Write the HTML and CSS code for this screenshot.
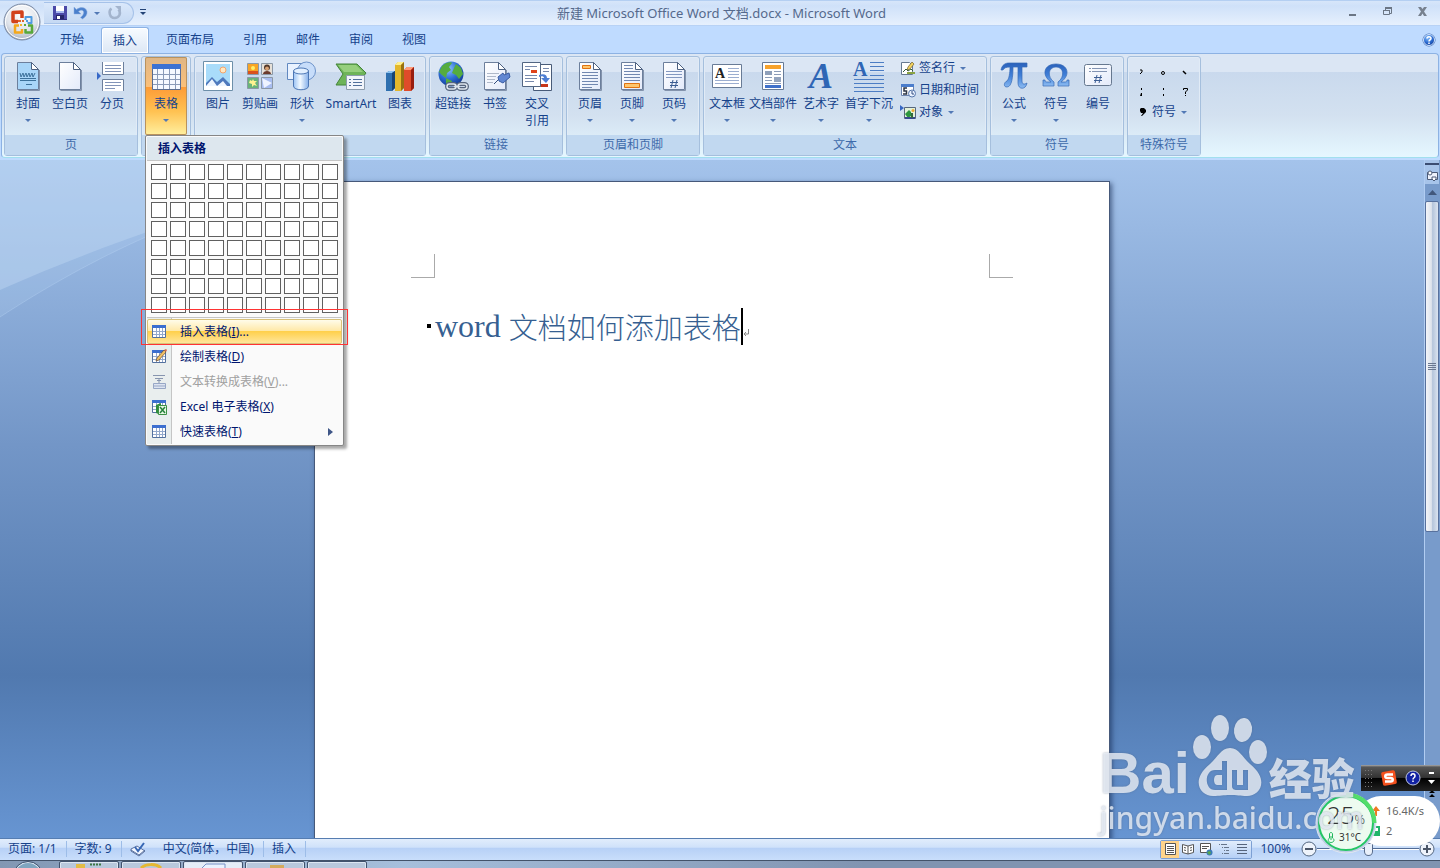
FILE: index.html
```html
<!DOCTYPE html>
<html lang="zh-CN">
<head>
    <meta charset="UTF-8">
    <meta name="viewport" content="width=device-width, initial-scale=1.0">
    <title>新建 Microsoft Office Word 文档.docx - Microsoft Word</title>
    <link rel="stylesheet" href="styles.css">
</head>
<body>
    <svg class="defs" aria-hidden="true">
        <defs>
            <linearGradient id="blue" x1="0" y1="0" x2="0" y2="1">
                <stop offset="0" stop-color="#2b62bb"/><stop offset=".5" stop-color="#3f7fd8"/><stop offset="1" stop-color="#8dbcf2"/>
            </linearGradient>
            <linearGradient id="paper" x1="0" y1="0" x2="1" y2="1">
                <stop offset="0" stop-color="#ffffff"/><stop offset="1" stop-color="#e3eafa"/>
            </linearGradient>
            <linearGradient id="shape" x1="0" y1="0" x2="1" y2="0">
                <stop offset="0" stop-color="#9cc3f4"/><stop offset=".45" stop-color="#f2f9ff"/><stop offset="1" stop-color="#86b0ea"/>
            </linearGradient>
            <radialGradient id="ball" cx=".4" cy=".3" r=".8">
                <stop offset="0" stop-color="#8cc4ff"/><stop offset=".5" stop-color="#2c6cd2"/><stop offset="1" stop-color="#0b2f86"/>
            </radialGradient>
            <radialGradient id="orb" cx=".5" cy=".3" r=".75">
                <stop offset="0" stop-color="#ffffff"/><stop offset=".6" stop-color="#dfe3ea"/><stop offset="1" stop-color="#9ba6b8"/>
            </radialGradient>
            <symbol id="page" viewBox="0 0 32 32">
                <path d="M5.500 2.500h14l7 7v20h-21z" fill="url(#paper)" stroke="#6c7f9c"/>
                <path d="M19.500 2.500v7h7z" fill="#fff" stroke="#4c6080"/>
                <path d="M27.500 10v20.500h-21" fill="none" stroke="#8393ac"/>
            </symbol>
            <symbol id="grid" viewBox="0 0 16 16">
                <path d="M1.500 1.500h13v12h-13z" fill="#fff" stroke="#53719f"/>
                <path d="M1 1h14v3H1z" fill="#3b6fd0"/>
                <path d="M2 7.500h12M2 10.500h12M5.500 4v9M8.500 4v9M11.500 4v9" stroke="#93a9cc"/>
            </symbol>
        </defs>
    </svg>

    <header class="titlebar">
        <div class="quick">
            <button class="tool" aria-label="保存"><svg width="16" height="16" viewBox="0 0 16 16"><path d="M1 1h14v14H1z" fill="#4a49a8"/><path d="M4 1h8v6H4z" fill="#fff"/><path d="M4 6h8v2H4z" fill="#a7b8f0"/><path d="M4 10h8v5H4z" fill="#25256a"/><path d="M5 11h3v4H5z" fill="#fff"/><path d="M1 14h14v1H1z" fill="#302e80"/></svg></button>
            <button class="tool" aria-label="撤消"><svg width="16" height="16" viewBox="0 0 16 16"><path d="M1 2v7h7L5.500 6.500c3-2.500 6-1 5 2-.5 2-2 3-3 4l2 1.500c3-2 5-4.500 4.500-7.500C13 2 7.500 1.500 3.500 4.500z" fill="#4b80cc" stroke="#8caee0" stroke-width=".5"/></svg></button>
            <button class="drop" aria-label="撤消列表"></button>
            <button class="tool" aria-label="恢复"><svg width="16" height="16" viewBox="0 0 16 16"><path d="M4.500 3.500C1 6 2.500 13 7.500 13s7-5 4-8.500" fill="none" stroke="#a3b4cd" stroke-width="2.500"/><path d="M8 1h6v6z" fill="#a3b4cd"/></svg></button>
        </div>
        <button class="customize" aria-label="自定义快速访问工具栏"><span class="drop"></span></button>
        <h1 class="caption">新建 Microsoft Office Word 文档.docx - Microsoft Word</h1>
        <div class="window-buttons">
            <button aria-label="最小化"><svg width="11" height="11"><path d="M2 8h7v2H2z" fill="#6b7685"/></svg></button>
            <button aria-label="还原"><svg width="11" height="11"><path d="M3.500 4V2.500h6v5H8M1.500 4.500h6v4h-6z" fill="none" stroke="#6b7685"/><path d="M3 1h7v2H3zM1 4h7v1H1z" fill="#6b7685"/></svg></button>
            <button aria-label="关闭"><svg width="11" height="11"><path d="M1 1h3l1.500 2L7 1h3L7 5.500 10 10H7L5.500 7.500 4 10H1l3-4.500z" fill="#77818f"/></svg></button>
        </div>
        <button class="office" aria-label="Office 按钮">
            <svg width="40" height="40" viewBox="0 0 40 40">
                <circle cx="20" cy="20" r="18" fill="url(#orb)" stroke="#7989a4"/>
                <circle cx="20" cy="20" r="16.500" fill="none" stroke="#fff"/>
                <g fill="none" stroke-linejoin="round">
                    <path d="M16 19.500h-5v-9l9-.5v6" stroke="#d2421c" stroke-width="3.500"/>
                    <path d="M23.500 18v-3h6v6h-4" stroke="#4f9be0" stroke-width="2"/>
                    <path d="M17 23.500h-4v7h7V27" stroke="#f4a81c" stroke-width="2.500"/>
                    <path d="M23.500 27v3.500h6.500v-7h-4" stroke="#57a83a" stroke-width="2.500"/>
                </g>
                <path d="M16 18h3v2h-3zM20 18h2v2h-2z" fill="#e2642a"/><path d="M24 18h2v2h-2z" fill="#4f9be0"/><path d="M18 22h2v2h-2z" fill="#f4b52c"/><path d="M22 22h2v2h-2z" fill="#57a83a"/>
            </svg>
        </button>
    </header>

    <nav class="tabs">
        <button>开始</button>
        <button class="active">插入</button>
        <button>页面布局</button>
        <button>引用</button>
        <button>邮件</button>
        <button>审阅</button>
        <button>视图</button>
        <button class="help" aria-label="帮助"><svg width="14" height="14"><circle cx="7" cy="7" r="6" fill="url(#ball)" stroke="#3d6ab5"/><circle cx="7" cy="7" r="5.500" fill="none" stroke="#cfe2fb"/><path d="M5 5.500c0-2.500 4-2.500 4 0C9 7 7 6.500 7 8.500M7 9.500v1.500" fill="none" stroke="#fff" stroke-width="1.500"/></svg></button>
    </nav>

    <div class="ribbon">
        <section class="group">
            <div class="commands">
                <button class="cmd"><svg class="icon" viewBox="0 0 32 32"><use href="#page"/><path d="M6 3h13v7h7v19H6z" fill="#a8d5f8"/><path d="M8 13l1 4 2-4 1 4 2-4 1 4 2-4 1 4 2-4 1 4 2-4M8 18.500h16M8 20.500h16M14 24.500h6" fill="none" stroke="#3c719b"/></svg><span>封面</span><i class="drop"></i></button>
                <button class="cmd"><svg class="icon" viewBox="0 0 32 32"><use href="#page"/></svg><span>空白页</span></button>
                <button class="cmd"><svg class="icon" viewBox="0 0 32 32"><path d="M6.500 2v12.500h21V2M6.500 31V19.500h21V31" fill="#fff" stroke="#6c7f9c"/><path d="M9 5.500h16M9 8.500h16M9 11.500h16M9 22.500h16M9 25.500h16M9 28.500h10" stroke="#8294b8"/><path d="M1 12l4 4-4 4z" fill="#3769c8"/></svg><span>分页</span></button>
            </div>
            <h2>页</h2>
        </section>

        <section class="group table-group" aria-label="表格">
            <div class="commands">
                <button class="cmd pressed"><svg class="icon" viewBox="0 0 32 32"><path d="M2.500 4.500h28v25h-28z" fill="#f5f8ff" stroke="#596c90"/><path d="M2 4h29v5H2z" fill="#3c72d2"/><path d="M3 14.500h27M3 19.500h27M3 24.500h27M7.500 9v20M13.500 9v20M19.500 9v20M25.500 9v20" stroke="#8a9ab8"/></svg><span>表格</span><i class="drop"></i></button>
            </div>
            <h2></h2>
            <div class="menu">
                <h3>插入表格</h3>
                <div class="cells" id="cells"></div>
                <div class="menu-items">
                    <button class="hot"><svg class="small"><use href="#grid"/></svg><span>插入表格(<u>I</u>)...</span></button>
                    <button><svg class="small" viewBox="0 0 16 16"><use href="#grid"/><path d="M5 12l1-3 7-8 2 2-7 8z" fill="#f1c163" stroke="#644b35" stroke-width=".7"/><path d="M13 1l2 2 1-2-1-1z" fill="#cf6b50"/></svg><span>绘制表格(<u>D</u>)</span></button>
                    <button disabled><svg class="small" viewBox="0 0 16 16"><path d="M2 1.500h12M4 4.500h8M8 4v5M6 6.500h4" fill="none" stroke="#8795af"/><path d="M2.500 9.500h12v5h-12zM2.500 12h12" fill="#dde4f1" stroke="#97a7c6"/></svg><span>文本转换成表格(<u>V</u>)...</span></button>
                    <button><svg class="small" viewBox="0 0 16 16"><use href="#grid"/><path d="M5 6l5-2v12l-5-2z" fill="#2e8c3c"/><path d="M7.500 6.500h8v9h-8z" fill="#e8f7e5" stroke="#3d9146"/><path d="M9 8l5 6M14 8l-5 6" stroke="#24813a" stroke-width="1.500"/></svg><span>Excel 电子表格(<u>X</u>)</span></button>
                    <button><svg class="small"><use href="#grid"/></svg><span>快速表格(<u>T</u>)</span><svg class="more" width="5" height="8"><path d="M0 0l5 4-5 4z" fill="#3f5687"/></svg></button>
                </div>
                <div class="mark"></div>
            </div>
        </section>

        <section class="group" aria-label="插图">
            <div class="commands">
                <button class="cmd"><svg class="icon" viewBox="0 0 32 32"><path d="M1.500 1.500h29v29h-29z" fill="#fff" stroke="#6d8fa9"/><path d="M4 4h24v22H4z" fill="#a9dcfa"/><circle cx="21" cy="10" r="3" fill="#ffe8c2" stroke="#f3a46b"/><path d="M4 26v-3l6-6 5 5 6-5 7 7v2z" fill="#4e79bd"/><path d="M4 26l6-7 5 7 6-5 4 5z" fill="#edf5ff"/></svg><span>图片</span></button>
                <button class="cmd"><svg class="icon" viewBox="0 0 32 32"><path d="M3.500 3.500h11v11h-11z" fill="#f8a425" stroke="#8b98a6"/><path d="M4 11h10v3H4z" fill="#d9521d"/><circle cx="9" cy="8" r="2" fill="#fff069"/><path d="M17.500 3.500h11v11h-11z" fill="#e6e0d8" stroke="#8b98a6"/><circle cx="23" cy="7.500" r="3" fill="#51382b"/><circle cx="23" cy="8.500" r="2" fill="#d8a173"/><path d="M19 14c0-4 8-4 8 0z" fill="#6c3b2c"/><path d="M3.500 17.500h11v11h-11z" fill="#69b37a" stroke="#8b98a6"/><path d="M6 20l2 1 1-2 1 2h3l-2 2 2 3-3-1-2 2v-3l-3-1z" fill="#fff391"/><path d="M17.500 17.500h11v11h-11z" fill="#a8bdf0" stroke="#8b98a6"/><path d="M18 18l10 5-8 5z" fill="#eef3ff"/></svg><span>剪贴画</span></button>
                <button class="cmd"><svg class="icon" viewBox="0 0 32 32"><path d="M1.500 3.500h18v16h-18z" fill="#e9f2ff" stroke="#6188c0"/><circle cx="20.500" cy="11" r="9" fill="#c7ddfa" stroke="#6d93ca"/><path d="M7.500 11v15c0 5 15 5 15 0V11z" fill="url(#shape)" stroke="#4d77b5"/><ellipse cx="15" cy="11" rx="7.500" ry="3" fill="#e3f0ff" stroke="#4d77b5"/></svg><span>形状</span><i class="drop"></i></button>
                <button class="cmd wide-56"><svg class="icon" viewBox="0 0 32 32"><path d="M1 4h21l9 9-9 12H1l7-11z" fill="#6eb459" stroke="#44853a"/><path d="M3 5h18l7 7H9z" fill="#96cf7d"/><path d="M11.500 15.500h18v14h-18z" fill="#f2f5fb" stroke="#8c9cad"/><path d="M14 19.500h2M18 19.500h9M14 22.500h2M18 22.500h9M14 25.500h2M18 25.500h9" stroke="#52709b"/></svg><span>SmartArt</span></button>
                <button class="cmd"><svg class="icon" viewBox="0 0 32 32"><path d="M2 13l3-2h6v17l-3 3H2z" fill="#2e6faf"/><path d="M2 13l3-2h6l-3 2z" fill="#8ec5f2"/><path d="M8 13l3-2v17l-3 3z" fill="#174474"/><path d="M11 5l3-3h6v26l-3 3h-6z" fill="#e3b72b"/><path d="M11 5l3-3h6l-3 3z" fill="#fff08d"/><path d="M17 5l3-3v26l-3 3z" fill="#987010"/><path d="M20 10l3-3h7v21l-3 3h-7z" fill="#df4b2a"/><path d="M20 10l3-3h7l-3 3z" fill="#ff9b79"/><path d="M27 10l3-3v21l-3 3z" fill="#981e10"/></svg><span>图表</span></button>
            </div>
            <h2></h2>
        </section>

        <section class="group">
            <div class="commands">
                <button class="cmd"><svg class="icon" viewBox="0 0 32 32"><circle cx="14" cy="14" r="12.500" fill="url(#ball)"/><path d="M5 6c5-5 10-4 10-3l-3 4 2 3-4 3-1 5-4-3-3-3zM19 4l5 4 2 6-4 5-3-4-4-2 2-5zM9 18l6 3-2 5-4-2z" fill="#55ac3e"/><g fill="none" stroke="#56657d" stroke-width="4"><rect x="10" y="24" width="9" height="5" rx="2.500"/><rect x="21" y="24" width="9" height="5" rx="2.500"/><path d="M17 26.500h6"/></g><g fill="none" stroke="#dce4ed" stroke-width="1.500"><rect x="10" y="24" width="9" height="5" rx="2.500"/><rect x="21" y="24" width="9" height="5" rx="2.500"/><path d="M17 26.500h6"/></g></svg><span>超链接</span></button>
                <button class="cmd"><svg class="icon" viewBox="0 0 32 32"><use href="#page"/><path d="M8 13.500h12M8 16.500h9M8 19.500h8M8 22.500h6" stroke="#aeb8c9"/><path d="M15 24l7-7" stroke="#344e7c"/><path d="M19 17l5-4 1 2 5-2 1 4-7 6-4-2z" fill="#6187d2" stroke="#3a5da4"/></svg><span>书签</span></button>
                <button class="cmd"><svg class="icon" viewBox="0 0 32 32"><path d="M12.500 4.500h18v26h-18z" fill="#fff" stroke="#485b78"/><path d="M19 24h8v3h-8z" fill="#c73719"/><path d="M1.500 2.500h18v24h-18z" fill="#fff" stroke="#526683"/><path d="M4 6.500h12M4 9.500h5M4 15.500h12M4 18.500h12M4 21.500h9M22 8.500h6M22 11.500h6" stroke="#7789ac"/><path d="M10 10h6v3h-6z" fill="#df431b"/><path d="M18 15c5-2 8 0 8 3h3l-4 5-5-5h3c0-2-3-2-5-1z" fill="#4d7ed3"/></svg><span>交叉<br>引用</span></button>
            </div>
            <h2>链接</h2>
        </section>

        <section class="group">
            <div class="commands">
                <button class="cmd"><svg class="icon" viewBox="0 0 32 32"><use href="#page"/><path d="M8.500 5.500h8v3h-8z" fill="#ffc66d" stroke="#df7412"/><path d="M8 12.500h16M8 15.500h16M8 18.500h16M8 21.500h16M8 24.500h16M8 27.500h10" stroke="#7187b0"/></svg><span>页眉</span><i class="drop"></i></button>
                <button class="cmd"><svg class="icon" viewBox="0 0 32 32"><use href="#page"/><path d="M8 5.500h9M8 8.500h9M8 11.500h16M8 14.500h16M8 17.500h16M8 20.500h16" stroke="#7187b0"/><path d="M8.500 23.500h15v4h-15z" fill="#ffc66d" stroke="#df7412"/></svg><span>页脚</span><i class="drop"></i></button>
                <button class="cmd"><svg class="icon" viewBox="0 0 32 32"><use href="#page"/><path d="M8 11.500h16M8 14.500h16M8 17.500h16" stroke="#8398c0"/><path d="M15 20l-2 8M19 20l-2 8M12 22.500h8M12 25.500h8" stroke="#3a5c91"/></svg><span>页码</span><i class="drop"></i></button>
            </div>
            <h2>页眉和页脚</h2>
        </section>

        <section class="group">
            <div class="commands">
                <button class="cmd"><svg class="icon" viewBox="0 0 32 32"><path d="M1.500 4.500h29v23h-29z" fill="#fff" stroke="#687b96"/><path d="M17 8.500h11M17 11.500h11M17 14.500h11M17 17.500h11M4 20.500h24M4 23.500h24" stroke="#9caed0"/><text x="4" y="18" class="letter black" font-size="14">A</text></svg><span>文本框</span><i class="drop"></i></button>
                <button class="cmd wide-50"><svg class="icon" viewBox="0 0 32 32"><path d="M5.500 2.500h21v27h-21z" fill="#fff" stroke="#667a97"/><path d="M8 5h16v4H8z" fill="#f6a22c"/><path d="M8 11h7v4H8z" fill="#8e9fb9"/><path d="M17 11.500h7M17 14.500h7M8 17.500h7M8 20.500h7M8 23.500h16" stroke="#8c9cb8"/><path d="M17 17h7v5h-7z" fill="#94a4be"/><path d="M8 25h16v3H8z" fill="#3f70ca"/></svg><span>文档部件</span><i class="drop"></i></button>
                <button class="cmd wide-46"><svg class="icon" viewBox="0 0 32 32"><text x="4" y="28" class="letter slant" font-size="36">A</text></svg><span>艺术字</span><i class="drop"></i></button>
                <button class="cmd wide-50"><svg class="icon" viewBox="0 0 32 32"><text x="0" y="16" class="letter" font-size="20">A</text><path d="M17 2.500h14M17 6.500h14M17 10.500h14M17 15.500h14M1 19.500h30M1 23.500h30M1 27.500h30M1 31.500h30" stroke="#4c7dc4"/></svg><span>首字下沉</span><i class="drop"></i></button>
                <div class="stack">
                    <button><svg class="small" viewBox="0 0 16 16"><path d="M1.500 2.500h8l3 3v9h-11z" fill="#fff" stroke="#667991"/><path d="M3 12l3-3 2 2 3-2 2 2" fill="none" stroke="#345a36"/><path d="M7 10l1-3 4-5 2 2-4 5z" fill="#f3d35e" stroke="#6d5b2d" stroke-width=".7"/><path d="M7 12h8v2H7z" fill="#8aa342"/></svg>签名行<i class="drop"></i></button>
                    <button><svg class="small" viewBox="0 0 16 16"><path d="M1.500 2.500h12v11h-12z" fill="#fff" stroke="#6c84b0"/><path d="M1 2h13v3H1z" fill="#4b7dcc"/><path d="M7 6H4v3h2.500v3H3" fill="none" stroke="#2d3544" stroke-width="1.500"/><circle cx="12" cy="11.500" r="3.500" fill="#e8f1ff" stroke="#5676aa"/><path d="M12 9v3h2" fill="none" stroke="#344e80"/></svg>日期和时间</button>
                    <button><svg class="small" viewBox="0 0 16 16"><path d="M4.500 3.500h11v11h-11z" fill="#e4f1d8" stroke="#57677c"/><path d="M0 1l4 3-4 3z" fill="#3767c2"/><path d="M5 10l4-4 2 2v4l-3 2z" fill="#2c963e"/><circle cx="13" cy="6.500" r="1.500" fill="#ebaa32"/><path d="M5 13h10v2H5z" fill="#37488d"/><path d="M12 9v5" stroke="#35673e" stroke-width="2"/></svg>对象<i class="drop"></i></button>
                </div>
            </div>
            <h2>文本</h2>
        </section>

        <section class="group">
            <div class="commands">
                <button class="cmd"><svg class="icon" viewBox="0 0 32 32"><path d="M3 10c1-5 4-7 8-7h18v4h-5v14c0 3 2 4 5 2-1 7-9 7-9 0V7h-5c0 9-1 20-6 20-4 0-3-5 0-6 2-2 3-8 3-14-4 0-6 1-7 3z" fill="url(#blue)" stroke="#366ab6" stroke-width=".7"/></svg><span>公式</span><i class="drop"></i></button>
                <button class="cmd"><svg class="icon" viewBox="0 0 32 32"><path d="M3 26v-6h2c0 2 1 2 3 2h3C1 15 4 4 16 4s15 11 5 18h3c2 0 3 0 3-2h2v6H18v-4c7-5 6-15-2-15s-9 10-2 15v4z" fill="url(#blue)" stroke="#366ab6" stroke-width=".7"/></svg><span>符号</span><i class="drop"></i></button>
                <button class="cmd"><svg class="icon" viewBox="0 0 32 32"><rect x="2.500" y="4.500" width="27" height="21" rx="2" fill="url(#paper)" stroke="#66788f"/><path d="M7 8.500h2M10 8.500h15M7 11.500h2M10 11.500h15" stroke="#8293b2"/><path d="M15 15l-2 8M19 15l-2 8M12 17.500h8M12 20.500h8" stroke="#3d5f95"/></svg><span>编号</span></button>
            </div>
            <h2>符号</h2>
        </section>

        <section class="group">
            <div class="commands special">
                <button aria-label="逗号"><svg width="8" height="8"><path d="M3 1h2v2L3 5" fill="none" stroke="#000"/></svg></button>
                <button aria-label="句号"><svg width="8" height="8"><circle cx="4" cy="4" r="1.500" fill="none" stroke="#000"/></svg></button>
                <button aria-label="顿号"><svg width="8" height="8"><path d="M2 2l3 3" stroke="#000" stroke-width="1.500"/></svg></button>
                <button aria-label="分号"><svg width="8" height="10"><path d="M4 1h1v2H4zM4 6h1v3H3z"/></svg></button>
                <button aria-label="冒号"><svg width="8" height="10"><path d="M4 1h1v2H4zM4 7h1v2H4z"/></svg></button>
                <button aria-label="问号"><svg width="8" height="10"><path d="M2.500 3V1.500h4V3L4.500 5v2M4.500 8v1" fill="none" stroke="#000"/></svg></button>
                <button class="symbols"><svg width="8" height="10"><path d="M2 1h3l2 2v2L3 9H2l2-3H2L1 4V2z"/></svg>符号<i class="drop"></i></button>
            </div>
            <h2>特殊符号</h2>
        </section>
    </div>

    <main class="workspace">
        <svg class="swoosh" viewBox="0 0 320 170" aria-hidden="true"><path d="M0 0h320v-23C210 47 100 86 0 130z" fill="#c5dcf5" opacity=".0"/><path d="M0 0h320v23C210 47 100 86 0 130z" fill="#c5dcf5" opacity=".4"/><path d="M0 157C80 105 180 52 320 18V0H0z" fill="#b9d7f7" opacity=".2"/><path d="M0 157C80 105 180 52 320 18" fill="none" stroke="#b6d1f3" opacity=".4"/></svg>
        <div class="canvas">
            <article class="sheet">
                <div class="corners"><i></i><i></i></div>
                <p class="heading"><span class="latin">word </span>文档如何添加表格<span class="caret"></span><svg class="return" width="7" height="8"><path d="M5.500 0v5H1M3 3L1 5l2 2" fill="none" stroke="#888"/></svg></p>
            </article>
        </div>
        <div class="scrollbar">
            <button class="split" aria-label="拆分"></button>
            <button class="ruler" aria-label="标尺"><svg width="13" height="13"><path d="M1.500 3.500h10v7h-10z" fill="#eef2fb" stroke="#4c5b78"/><circle cx="4" cy="4" r="2" fill="#fff" stroke="#4c5b78"/><path d="M6 8h4v2l-2 2-2-2z" fill="#fff" stroke="#4c5b78"/></svg></button>
            <button class="up" aria-label="向上滚动"><svg width="9" height="5"><path d="M0 5l4.500-5L9 5z" fill="#41577c"/></svg></button>
            <div class="thumb"><i></i></div>
            <button class="prev" aria-label="前一页"><svg width="8" height="8"><path d="M4 0l3 3H1zM4 4l3 3H1z"/></svg></button>
        </div>
    </main>

    <footer class="statusbar">
        <span>页面: 1/1</span>
        <span>字数: 9</span>
        <span class="language"><svg class="small" viewBox="0 0 16 16"><path d="M1 8l6-3 8 5-6 5-8-5z" fill="#f3f7ff" stroke="#58709e"/><path d="M1 9l8 5 6-5" fill="none" stroke="#58709e"/><path d="M5 6l3 4 6-8" fill="none" stroke="#3767b4" stroke-width="2"/></svg>中文(简体，中国)</span>
        <span>插入</span>
        <div class="views">
            <button class="on" aria-label="页面视图"><svg class="small" viewBox="0 0 16 16"><path d="M3.500 2.500h10v11h-10z" fill="#fff" stroke="#555"/><path d="M5 5.500h7M5 7.500h7M5 9.500h7M5 11.500h7" stroke="#555"/></svg></button>
            <button aria-label="阅读版式"><svg class="small" viewBox="0 0 16 16"><path d="M2.500 3.500L8 5l5.500-1.500v8L8 13l-5.500-1.500zM8 5v8M4 6.500l2 .5M4 9l2 .5M12 6.500l-2 .5M12 9l-2 .5" fill="#fff" stroke="#555"/></svg></button>
            <button aria-label="Web 版式"><svg class="small" viewBox="0 0 16 16"><path d="M2.500 2.500h10v9h-10z" fill="#fff" stroke="#555"/><path d="M4 5.500h7M4 7.500h5" stroke="#555"/><circle cx="11.500" cy="11.500" r="3" fill="#3979b8"/><path d="M9 11l3-1 1 2-2 2z" fill="#57a84e"/></svg></button>
            <button aria-label="大纲视图"><svg class="small" viewBox="0 0 16 16"><path d="M3 3.500h8M6 6.500h7M8 9.500h5M6 12.500h7" stroke="#66758b" stroke-dasharray="1 1 9"/></svg></button>
            <button aria-label="普通视图"><svg class="small" viewBox="0 0 16 16"><path d="M3 3.500h10M3 6.500h10M3 9.500h10M3 12.500h10" stroke="#55647c"/></svg></button>
        </div>
        <span class="zoom">100%</span>
        <button class="round" aria-label="缩小"><svg width="16" height="16"><circle cx="8" cy="8" r="7" fill="#eef3fb" stroke="#536680"/><path d="M4 7h8v2H4z" fill="#4b5668"/></svg></button>
        <input class="slider" type="range" min="0" max="100" value="50" aria-label="显示比例">
        <button class="round" aria-label="放大"><svg width="16" height="16"><circle cx="8" cy="8" r="7" fill="#eef3fb" stroke="#536680"/><path d="M4 7h8v2H4zM7 4h2v8H7z" fill="#4b5668"/></svg></button>
    </footer>

    <div class="taskbar">
        <button class="start" aria-label="开始"></button>
        <button aria-label="资源管理器"><svg width="26" height="6"><path d="M0 2h9v4H0z" fill="#e2bc45"/><path d="M14 2.500h12" stroke="#3c7745" stroke-width="2" stroke-dasharray="2 1"/></svg></button>
        <button aria-label="浏览器"><svg width="26" height="6"><path d="M3 6c4-4 15-5 20 0" fill="none" stroke="#e5b832" stroke-width="3"/></svg></button>
        <button class="current" aria-label="Word"><svg width="26" height="6"><path d="M2 6l4-4h19v4" fill="#e9f2ff" stroke="#7791c6"/></svg></button>
        <button aria-label="文件夹"><svg width="26" height="6"><path d="M8 3h14v3H8z" fill="#d5ab5c"/></svg></button>
        <button aria-label="窗口"></button>
    </div>

    <div class="ime">
        <svg width="10" height="18"><path d="M1 1.500h9M1 5.500h9M1 9.500h9M1 13.500h9M1 17.500h9" stroke="#777" stroke-dasharray="1 2"/></svg>
        <svg width="16" height="16"><rect x="1" y="1" width="14" height="14" rx="2" fill="#f4511e" transform="rotate(-10 8 8)"/><path d="M12 4.500H6.500C3.500 4.500 3.500 8 6.500 8h3c3 0 3 3.500 0 3.500H4" fill="none" stroke="#fff" stroke-width="2.500"/></svg>
        <svg width="16" height="16"><circle cx="8" cy="8" r="7" fill="#1222a2" stroke="#bfc8e2"/><path d="M6 6c0-3 4-3 4 0 0 2-2 1.500-2 3.500M8 10.500V12" fill="none" stroke="#fff" stroke-width="1.500"/></svg>
        <svg width="7" height="14"><path d="M1 1h5v2H1zM0 9h7l-3.500 4z" fill="#fff"/></svg>
    </div>
    <div class="network">
        <div><svg width="8" height="10"><path d="M4 0l4 5H5v5H3V5H0z" fill="#ef7a22"/></svg>16.4K/s</div>
        <div><svg width="8" height="10"><path d="M0 0h8v10H0z" fill="#20b46a"/><path d="M2 2h4v3H2z" fill="#fff"/></svg>2</div>
    </div>
    <div class="gauge">
        <svg class="ring" viewBox="0 0 62 62"><circle cx="31" cy="31" r="30" fill="#bccce5" stroke="#e0e7f1"/><circle cx="31" cy="31" r="27" fill="#edfbf0" stroke="#25c665" stroke-width="2"/><path d="M31 2.500A28.500 28.500 0 0 1 59.500 31" fill="none" stroke="#54dd6b" stroke-width="4"/></svg>
        <div class="percent">25<small>%</small></div>
        <div class="degree"><svg width="8" height="11"><path d="M2.500 6V2c0-2 3-2 3 0v4c3 2 1 4.500-1.500 4.500S0 8 2.500 6zM4 4v4" fill="none" stroke="#20b85c"/></svg>31°C</div>
    </div>
    <div class="watermark">
        <div class="brand">
            <b>Bai</b>
            <svg width="76" height="84" viewBox="0 0 76 84"><path fill-rule="evenodd" d="M38 34c9 0 12 9 20 16 20 16 10 32-3 32-7 0-10-1-17-1s-10 1-17 1C8 82-2 66 18 50c8-7 11-16 20-16zm-8 13h5v29H23c-11 0-11-20 0-20h7zm0 14h-5c-4 0-4 10 0 10h5zm10-5h5v15h6V56h5v20H45c-3 0-5-1-5-4z"/><ellipse cx="10" cy="33" rx="9" ry="12"/><ellipse cx="28" cy="14" rx="9" ry="13"/><ellipse cx="51" cy="16" rx="9" ry="12" transform="rotate(8 51 16)"/><ellipse cx="66" cy="38" rx="9" ry="12"/></svg>
            <b class="cn">经验</b>
        </div>
        <div class="site">jingyan.baidu.com</div>
    </div>

    <script>
        // 10 x 8 格的表格选择区
        const cells = document.getElementById('cells');
        for (let row = 1; row <= 8; row++) {
            for (let col = 1; col <= 10; col++) {
                const cell = document.createElement('button');
                cell.setAttribute('aria-label', `${col}x${row} 表格`);
                cells.appendChild(cell);
            }
        }
    </script>
</body>
</html>
```

FILE: styles.css
```css
* {
    box-sizing: border-box;
}
body {
    margin: 0;
    height: 100vh;
    display: flex;
    flex-direction: column;
    position: relative;
    overflow: hidden;
    background: #bfdbff;
    color: #15428b;
    font: 12px/16px "Noto Sans", "Noto Sans CJK SC", sans-serif;
}
button {
    margin: 0;
    padding: 0;
    border: 0;
    background: none;
    color: inherit;
    font: inherit;
}
svg {
    display: block;
    flex: none;
}
h1, h2, h3, p {
    margin: 0;
    font-size: 12px;
    font-weight: normal;
}
.defs {
    position: absolute;
    width: 0;
    height: 0;
}
.small {
    width: 16px;
    height: 16px;
}
.drop {
    width: 0;
    height: 0;
    border: 3px solid transparent;
    border-top-color: #5279b5;
    border-bottom: 0;
}

/* Title bar */
.titlebar {
    position: relative;
    flex: none;
    display: flex;
    align-items: center;
    height: 26px;
    padding-left: 44px;
    background: linear-gradient(#d7e6fa, #cfe1f9 20%, #e6f0fd);
    border-top: 1px solid #b4cff2;
    border-bottom: 1px solid #b8d2f5;
}
.quick {
    display: flex;
    align-items: center;
    gap: 5px;
    width: 90px;
    height: 22px;
    padding-left: 8px;
    background: linear-gradient(#dae8fb, #c5d9f3);
    border: 1px solid #a6c2e9;
    border-left: 0;
    border-radius: 0 11px 11px 0;
}
.quick .drop {
    flex: none;
    margin-right: 2px;
}
.customize {
    width: 18px;
    height: 16px;
    display: flex;
    align-items: center;
    justify-content: center;
}
.customize .drop {
    position: relative;
    border-top-color: #234477;
}
.customize .drop::before {
    content: "";
    position: absolute;
    left: -3px;
    top: -6px;
    width: 6px;
    height: 1px;
    background: #234477;
}
.caption {
    flex: 1;
    padding-right: 56px;
    font-size: 13px;
    text-align: center;
    color: #55698c;
}
.window-buttons {
    display: flex;
    gap: 24px;
    padding-right: 12px;
    padding-bottom: 4px;
}
.office {
    position: absolute;
    left: 2px;
    top: 1px;
    z-index: 2;
}

/* Tabs */
.tabs {
    flex: none;
    display: flex;
    align-items: flex-end;
    gap: 5px;
    height: 27px;
    padding: 0 4px 0 48px;
}
.tabs button {
    height: 26px;
    padding: 0 12px;
    border: 0 solid #8db2e3;
}
.tabs .active {
    background: linear-gradient(#f7fbff, #dce7f5);
    border-width: 1px 1px 0;
    border-radius: 3px 3px 0 0;
    padding: 0 11px;
    box-shadow: inset 0 0 0 1px #fff;
}
.tabs .help {
    margin-left: auto;
    padding: 0;
}

/* Ribbon */
.ribbon {
    flex: none;
    display: flex;
    gap: 3px;
    height: 105px;
    margin: 0 1px 2px;
    padding: 2px 2px 1px;
    background: linear-gradient(#dbe6f4 17%, #c9d9ed 17%, #d3e1f0 60%, #e5f7ff);
    border: 1px solid #8db2e3;
    border-bottom-color: #a1dfee;
    border-radius: 4px;
}
.group {
    flex: none;
    display: flex;
    flex-direction: column;
    position: relative;
    border: 1px solid #a5bfdd;
    border-radius: 3px;
    box-shadow: inset 0 0 0 1px #e1ebf6;
}
.commands {
    flex: 1;
    display: flex;
    padding: 0 4px 0 2px;
}
.table-group .commands {
    padding: 0 3px;
}
.group h2 {
    height: 20px;
    line-height: 20px;
    text-align: center;
    color: #3e6aaa;
    background: #c1d8f0;
}
.cmd {
    width: 42px;
    display: flex;
    flex-direction: column;
    align-items: center;
    justify-content: flex-start;
    padding-top: 3px;
    white-space: nowrap;
    line-height: 17px;
}
.cmd span {
    margin-top: 3px;
}
.cmd .drop {
    margin-top: 7px;
}
.icon {
    width: 32px;
    height: 32px;
    overflow: visible;
}
.wide-46 {
    width: 46px;
}
.wide-50 {
    width: 50px;
}
.wide-56 {
    width: 56px;
}
.letter {
    font-family: "Liberation Serif", serif;
    font-weight: bold;
    fill: #2f66b5;
}
.letter.black {
    fill: #222;
}
.letter.slant {
    font-style: italic;
}
.pressed {
    background: linear-gradient(#dfb685, #fbc07a 38%, #fd9a36 38%, #ffc252 70%, #fff0a0);
    border-radius: 2px;
    box-shadow: inset 0 0 0 1px #b9925d;
}
.stack {
    display: flex;
    flex-direction: column;
    gap: 6px;
    width: 88px;
    padding: 3px 0 0 6px;
}
.stack button {
    display: flex;
    align-items: center;
    gap: 3px;
    white-space: nowrap;
}
.stack .drop {
    margin-left: 2px;
}
.special {
    width: 72px;
    display: grid;
    grid-template-columns: repeat(3, 1fr);
    grid-template-rows: 20px 18px 22px;
    padding-top: 6px;
}
.special button {
    display: flex;
    align-items: center;
    justify-content: center;
}
.special .symbols {
    grid-column: 1 / 4;
    gap: 5px;
}

/* Table menu */
.menu {
    position: absolute;
    left: 3px;
    top: 78px;
    z-index: 5;
    width: 199px;
    padding: 1px;
    background: #fafafa;
    border: 1px solid #868686;
    border-radius: 2px;
    box-shadow: 3px 3px 3px rgba(0, 0, 0, .35);
    color: #00156e;
}
.menu h3 {
    height: 24px;
    padding-left: 11px;
    line-height: 23px;
    font-weight: bold;
    background: #dde7ee;
    border-bottom: 1px solid #c5c5c5;
}
.cells {
    display: grid;
    grid-template-columns: repeat(10, 16px);
    grid-auto-rows: 16px;
    gap: 3px;
    padding: 3px 4px 4px;
}
.cells button {
    background: #fff;
    border: 1px solid #606060;
}
.menu-items {
    padding-top: 1px;
    border-top: 1px solid #c5c5c5;
    background: linear-gradient(90deg, #e9eeee 24px, #c5c5c5 24px, #c5c5c5 25px, #fafafa 25px);
}
.menu-items button {
    display: flex;
    align-items: center;
    gap: 13px;
    width: 100%;
    height: 25px;
    padding: 0 9px 0 4px;
}
.menu-items button:disabled {
    color: #a0a0a0;
}
.menu-items .hot {
    background: linear-gradient(#fffcea, #ffe8a6 48%, #ffd04c 50%, #ffe69b);
    border: 1px solid #d8c179;
    border-radius: 2px;
    padding-left: 3px;
}
.more {
    margin-left: auto;
}
.mark {
    position: absolute;
    left: -5px;
    right: -5px;
    top: 173px;
    height: 36px;
    border: 1px solid #f33;
}

/* Document */
.workspace {
    flex: 1;
    min-height: 0;
    display: flex;
    position: relative;
    background: linear-gradient(#a4c3eb, #7396c7 42%, #5179af 76%, #6795d2);
}
.swoosh {
    position: absolute;
    left: 0;
    top: 0;
    width: 320px;
    height: 170px;
}
.canvas {
    flex: 1;
    position: relative;
    overflow: hidden;
    padding-top: 21px;
}
.sheet {
    width: 796px;
    height: 1123px;
    margin: 0 auto;
    padding: 72px 96px;
    background: #fff;
    border: 1px solid #46597a;
    box-shadow: 2px 2px 5px rgba(20, 40, 80, .6);
}
.corners {
    display: flex;
    justify-content: space-between;
}
.corners i {
    width: 24px;
    height: 24px;
    border: solid #aaa;
    border-width: 0 1px 1px 0;
}
.corners i + i {
    border-width: 0 0 1px 1px;
}
.heading {
    display: flex;
    align-items: center;
    margin-top: 29px;
    padding-left: 16px;
    height: 38px;
    color: #365f91;
    font: 300 29px/38px "Noto Sans CJK SC", sans-serif;
    white-space: pre;
}
.heading::before {
    content: "";
    width: 4px;
    height: 4px;
    margin-right: 4px;
    background: #000;
}
.latin {
    font: 32px/38px "Liberation Serif", serif;
}
.caret {
    width: 2px;
    height: 37px;
    background: #000;
}
.return {
    margin-top: 14px;
}
.scrollbar {
    position: relative;
    flex: none;
    display: flex;
    flex-direction: column;
    width: 16px;
    padding-right: 1px;
    background: #789bcb;
    border-left: 1px solid #b1cdf2;
}
.scrollbar button {
    display: flex;
    align-items: center;
    justify-content: center;
}
.split {
    flex: none;
    height: 7px;
    background: linear-gradient(#a7c4ea 3px, #3b4d72 3px, #3b4d72 5px, #a7c4ea 5px);
}
.ruler {
    height: 17px;
    background: #a7c4ea;
}
.up {
    height: 17px;
}
.thumb {
    height: 331px;
    display: flex;
    align-items: center;
    justify-content: center;
    background: linear-gradient(90deg, #f3f5f9, #dde3ec 45%, #b5c5db 55%, #dbe4f0);
    border: 1px solid #58719d;
    border-radius: 2px;
}
.thumb i {
    width: 8px;
    height: 7px;
    background: repeating-linear-gradient(#6b7890 0 1px, transparent 1px 2px);
}
.prev {
    margin-top: auto;
    height: 88px;
}

/* Status bar */
.statusbar {
    flex: none;
    display: flex;
    align-items: center;
    height: 22px;
    padding: 0 5px 1px 0;
    border-top: 1px solid #567db1;
    background: linear-gradient(#e1edfc, #cfe1fa 40%, #b6d0f6 42%, #c9defb);
}
.statusbar > span {
    padding: 0 9px 0 8px;
    border-right: 1px solid #9dbde8;
}
.statusbar .language {
    display: flex;
    gap: 17px;
}
.statusbar .zoom {
    padding-right: 10px;
    border: 0;
}
.views {
    display: flex;
    margin-left: auto;
    border: 1px solid #7da0d4;
    border-radius: 2px;
}
.views button {
    width: 18px;
    height: 17px;
    padding: 0 1px;
    background: linear-gradient(#e1edfc, #b6d0f6);
}
.views .on {
    background: #ffd48b;
}
.slider {
    width: 102px;
    height: 16px;
    margin: 0;
    appearance: none;
    background: linear-gradient(transparent 7px, #526c96 7px, #526c96 8px, #fff 8px, #fff 9px, transparent 9px);
}
.slider::-webkit-slider-thumb {
    appearance: none;
    width: 9px;
    height: 13px;
    background: #e9f0fb;
    border: 1px solid #566a8b;
    border-radius: 1px 1px 5px 5px;
}

/* Windows taskbar */
.taskbar {
    flex: none;
    display: flex;
    gap: 2px;
    height: 8px;
    padding-right: 4px;
    overflow: hidden;
    background: linear-gradient(90deg, #8297b3, #a6bfdc 28%, #8094b1 60%);
    border-top: 1px solid #43536a;
}
.taskbar button {
    display: flex;
    justify-content: center;
    width: 60px;
    height: 20px;
    background: #b8c8dc;
    border: 1px solid #40526d;
    border-radius: 2px;
    box-shadow: inset 0 0 0 1px #dce6f2;
}
.taskbar .start {
    width: 30px;
    margin: 0 14px 0 13px;
    border-radius: 15px 15px 0 0;
    background: #7fa5bf;
}
.taskbar .current {
    background: #e4edf8;
}

/* Desktop widgets */
.ime {
    position: absolute;
    right: 0;
    bottom: 77px;
    display: flex;
    align-items: center;
    justify-content: space-between;
    width: 79px;
    height: 26px;
    padding: 0 5px 0 3px;
    background: linear-gradient(#aaa, #555 8%, #333 48%, #000 50%, #222);
}
.network {
    position: absolute;
    right: 0;
    bottom: 22px;
    width: 84px;
    height: 50px;
    padding: 5px 0 5px 16px;
    background: #fff;
    border-radius: 25px;
    color: #666;
    font-size: 11px;
    line-height: 20px;
}
.network div {
    display: flex;
    align-items: center;
    gap: 6px;
}
.gauge {
    position: absolute;
    right: 63px;
    bottom: 14px;
    width: 62px;
    height: 62px;
    padding-top: 11px;
    color: #333;
    text-align: center;
}
.ring {
    position: absolute;
    left: 0;
    top: 0;
}
.percent {
    position: relative;
    font-size: 24px;
    font-weight: 300;
    line-height: 24px;
}
.percent small {
    font-size: 13px;
}
.degree {
    position: relative;
    display: flex;
    align-items: center;
    justify-content: center;
    gap: 4px;
    padding-right: 4px;
    font-size: 10px;
    line-height: 12px;
}
.watermark {
    position: absolute;
    right: 76px;
    bottom: 31px;
    z-index: 3;
    color: rgba(235, 240, 248, .8);
    filter: drop-shadow(0 0 1px rgba(80, 100, 130, .6));
    pointer-events: none;
}
.brand {
    display: flex;
    align-items: flex-end;
}
.brand b {
    font: bold 58px/50px "Liberation Sans", sans-serif;
}
.brand svg {
    fill: currentColor;
    margin: 0 1px 0 2px;
}
.brand .cn {
    font: 900 43px/44px "Noto Sans CJK SC", sans-serif;
}
.site {
    font-size: 30px;
    font-weight: 500;
    line-height: 39px;
}
```
